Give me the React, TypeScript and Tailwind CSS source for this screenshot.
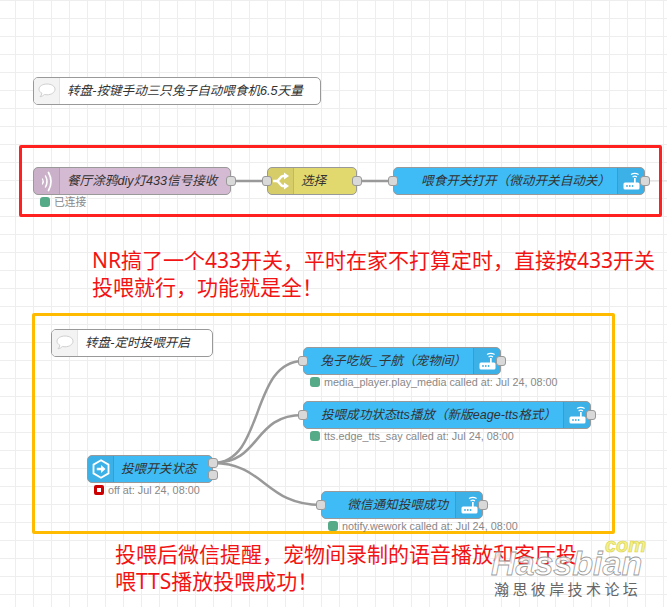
import React from 'react'

const SANS = "font-['Liberation_Sans','Noto_Sans_CJK_SC',sans-serif]"

// wifi router glyph used by the home assistant service nodes
const RouterIcon = () => (
  <svg width="17" height="18" viewBox="0 0 17 18" fill="none">
    <path d="M8 2.600 Q11.800 0.200 15.600 2.600" stroke="#fff" strokeWidth="1.200" />
    <path d="M9.600 4.900 Q11.800 3.500 14 4.900" stroke="#fff" strokeWidth="1.200" />
    <rect x="11" y="6" width="1.700" height="5" fill="#fff" />
    <rect x="0.500" y="10.500" width="16" height="7" rx="1.500" fill="#fff" />
    <circle cx="4" cy="14" r="0.900" fill="#3FADE5" />
    <circle cx="6.800" cy="14" r="0.900" fill="#3FADE5" />
    <circle cx="9.600" cy="14" r="0.900" fill="#3FADE5" />
  </svg>
)

const CommentIcon = () => (
  <svg width="18" height="16" viewBox="0 0 18 16" fill="none">
    <path
      d="M9 1C4.600 1 1 3.200 1 6.200c0 1.700 1.100 3.100 2.900 4-.2 1.400-.9 2.700-1.900 3.600 1.900-.3 3.400-1.200 4.400-2.300.8.200 1.700.3 2.600.3 4.400 0 8-2.500 8-5.600S13.400 1 9 1z"
      fill="#fff"
      stroke="#cfcfcf"
      strokeWidth="1"
    />
  </svg>
)

const WaveIcon = () => (
  <svg width="12" height="21" viewBox="0 0 12 21" fill="none" stroke="#fff" strokeLinecap="round">
    <path d="M1.500 8 Q3 10.500 1.500 13" strokeWidth="1.300" />
    <path d="M4.500 5 Q7.500 10.500 4.500 16" strokeWidth="1.500" />
    <path d="M7.500 1.500 Q12.500 10.500 7.500 19.500" strokeWidth="1.700" />
  </svg>
)

const SwitchIcon = () => (
  <svg width="16" height="18" viewBox="0 0 16 18" fill="none" stroke="#fff" strokeWidth="2.400">
    <path d="M0 9 H3.500 C6.500 9 7 4 10 4 H12" />
    <path d="M3.500 9 C6.500 9 7 14 10 14 H12" />
    <path d="M11 0.500 L16 4 L11 7.500 Z" fill="#fff" strokeWidth="0" />
    <path d="M11 10.500 L16 14 L11 17.500 Z" fill="#fff" strokeWidth="0" />
  </svg>
)

const HexIcon = () => (
  <svg width="18" height="20" viewBox="0 0 18 20" fill="none">
    <path d="M9 1.300 L16.500 5.600 V14.400 L9 18.700 L1.500 14.400 V5.600 Z" stroke="#fff" strokeWidth="1.800" />
    <path d="M4.800 8.700 H9 V6 L13.500 10 L9 14 V11.300 H4.800 Z" fill="#fff" />
  </svg>
)

const Port = ({ className }: { className: string }) => (
  <span className={`absolute w-[10px] h-[10px] rounded-[3px] bg-[#d9d9d9] border border-[#999] ${className}`} />
)

type NodeProps = {
  x: number
  y: number
  w: number
  label: string
  color: string
  icon: React.ReactNode
  iconRight?: boolean
  portIn?: boolean
  portOut?: number
  status?: string
  statusRed?: boolean
}

// node body with its ports, and the status line under it when there is one
const FlowNode = ({ x, y, w, label, color, icon, iconRight, portIn, portOut = 1, status, statusRed }: NodeProps) => (
  <div className="absolute flex flex-col" style={{ left: x, top: y, width: w }}>
    <div className={`relative h-[28px] rounded-[5px] border border-[#999] flex items-stretch ${color}`}>
      {!iconRight && (
        <div className="w-[26px] shrink-0 flex items-center justify-center bg-black/5 border-r border-black/10 rounded-l-[4px]">
          {icon}
        </div>
      )}
      <div
        className={`flex-1 flex items-center whitespace-nowrap italic text-[12.6px] text-[#333] ${SANS} ${
          iconRight ? 'justify-end pr-[7px]' : 'pl-[7px]'
        }`}
      >
        {label}
      </div>
      {iconRight && (
        <div className="w-[27px] shrink-0 flex items-center justify-center bg-black/5 border-l border-black/10 rounded-r-[4px]">
          {icon}
        </div>
      )}
      {portIn && <Port className="left-[-6px] top-[8px]" />}
      {portOut === 1 && <Port className="right-[-6px] top-[8px]" />}
      {portOut === 2 && (
        <>
          <Port className="right-[-6px] top-[2px]" />
          <Port className="right-[-6px] top-[14px]" />
        </>
      )}
    </div>
    {status && (
      <div className="flex items-center gap-[4px] pl-[7px] whitespace-nowrap">
        {statusRed ? (
          <span className="shrink-0 w-[10px] h-[10px] rounded-[2px] border-[3px] border-[#c00] bg-white" />
        ) : (
          <span className="shrink-0 w-[10px] h-[10px] rounded-[3px] bg-[#5a8]" />
        )}
        <span className={`text-[10.800px] leading-[14px] text-[#888] ${SANS}`}>{status}</span>
      </div>
    )}
  </div>
)

const Comment = ({ x, y, w, label }: { x: number; y: number; w: number; label: string }) => (
  <div
    className="absolute h-[28px] rounded-[5px] border border-[#999] bg-white flex items-stretch"
    style={{ left: x, top: y, width: w }}
  >
    <div className="w-[26px] shrink-0 flex items-center justify-center bg-[#f3f3f3] border-r border-[#e4e4e4] rounded-l-[4px]">
      <CommentIcon />
    </div>
    <div className={`flex-1 flex items-center pl-[7px] whitespace-nowrap italic text-[12.6px] text-[#333] ${SANS}`}>
      {label}
    </div>
  </div>
)

const Note = ({ x, y, lines }: { x: number; y: number; lines: string[] }) => (
  <div
    className="absolute text-[21px] leading-[27px] text-[#f21414] whitespace-nowrap font-['Noto_Sans','Noto_Sans_CJK_SC',sans-serif]"
    style={{ left: x, top: y }}
  >
    {lines.map((line) => (
      <div key={line}>{line}</div>
    ))}
  </div>
)

export default function App() {
  return (
    <div className="relative w-[667px] h-[607px] overflow-hidden bg-white bg-[linear-gradient(#eeeeee_1px,transparent_1px),linear-gradient(90deg,#eeeeee_1px,transparent_1px)] bg-[size:18px_18px] bg-[position:15px_0px]">
      {/* wires */}
      <svg className="absolute inset-0" width="667" height="607" fill="none">
        <g stroke="#999" strokeWidth="2.500">
          <path d="M231 181 H267" />
          <path d="M357 181 H393" />
          <path d="M213 463 C265 463 250 361 303 361" />
          <path d="M213 463 C262 463 252 415 303 415" />
          <path d="M213 463 C265 463 265 505 321 505" />
        </g>
        <path d="M650 181 H667" stroke="#ddd" strokeWidth="1" />
      </svg>

      <Comment x={33} y={77} w={288} label="转盘-按键手动三只兔子自动喂食机6.5天量" />

      <FlowNode x={33} y={167} w={198} label="餐厅涂鸦diy灯433信号接收" color="bg-[#D5BAD3]" icon={<WaveIcon />} status="已连接" />
      <FlowNode x={267} y={167} w={90} label="选择" color="bg-[#E2D96E]" icon={<SwitchIcon />} portIn />
      <FlowNode x={393} y={167} w={252} label="喂食开关打开（微动开关自动关）" color="bg-[#3FBBF5]" icon={<RouterIcon />} iconRight portIn />

      <div className="absolute left-[19px] top-[145px] w-[643px] h-[72px] border-[3px] border-[#ff2020] rounded-[2px]" />

      <Note x={92} y={247} lines={['NR搞了一个433开关，平时在家不打算定时，直接按433开关', '投喂就行，功能就是全！']} />

      <div className="absolute left-[32px] top-[313px] w-[583px] h-[221px] border-[3px] border-[#ffbb00] rounded-[2px]" />

      <Comment x={51} y={329} w={162} label="转盘-定时投喂开启" />

      <FlowNode x={87} y={455} w={126} label="投喂开关状态" color="bg-[#3FBBF5]" icon={<HexIcon />} portOut={2} status="off at: Jul 24, 08:00" statusRed />

      <FlowNode x={303} y={347} w={198} label="兔子吃饭_子航（宠物间）" color="bg-[#3FBBF5]" icon={<RouterIcon />} iconRight portIn status="media_player.play_media called at: Jul 24, 08:00" />
      <FlowNode x={303} y={401} w={288} label="投喂成功状态tts播放（新版eage-tts格式）" color="bg-[#3FBBF5]" icon={<RouterIcon />} iconRight portIn status="tts.edge_tts_say called at: Jul 24, 08:00" />
      <FlowNode x={321} y={491} w={162} label="微信通知投喂成功" color="bg-[#3FBBF5]" icon={<RouterIcon />} iconRight portIn status="notify.wework called at: Jul 24, 08:00" />

      <Note x={115} y={541} lines={['投喂后微信提醒，宠物间录制的语音播放和客厅投', '喂TTS播放投喂成功！']} />

      {/* watermark */}
      <div className="absolute left-[491px] top-[546px] text-[34px] leading-[34px] font-bold italic text-white/80 [-webkit-text-stroke:0.800px_#9a9a9a] whitespace-nowrap font-['Liberation_Sans',sans-serif]">
        Hassbian
      </div>
      <div className="absolute left-[605px] top-[535px] text-[20px] leading-[20px] font-bold italic text-[#f4f08a] [-webkit-text-stroke:0.600px_#d8d24a] whitespace-nowrap font-['Liberation_Sans',sans-serif]">
        com
      </div>
      <div className="absolute left-[494px] top-[580px] text-[15px] leading-[18px] tracking-[3.400px] text-[#666] whitespace-nowrap font-['Noto_Sans_CJK_SC',sans-serif]">
        瀚思彼岸技术论坛
      </div>
    </div>
  )
}
